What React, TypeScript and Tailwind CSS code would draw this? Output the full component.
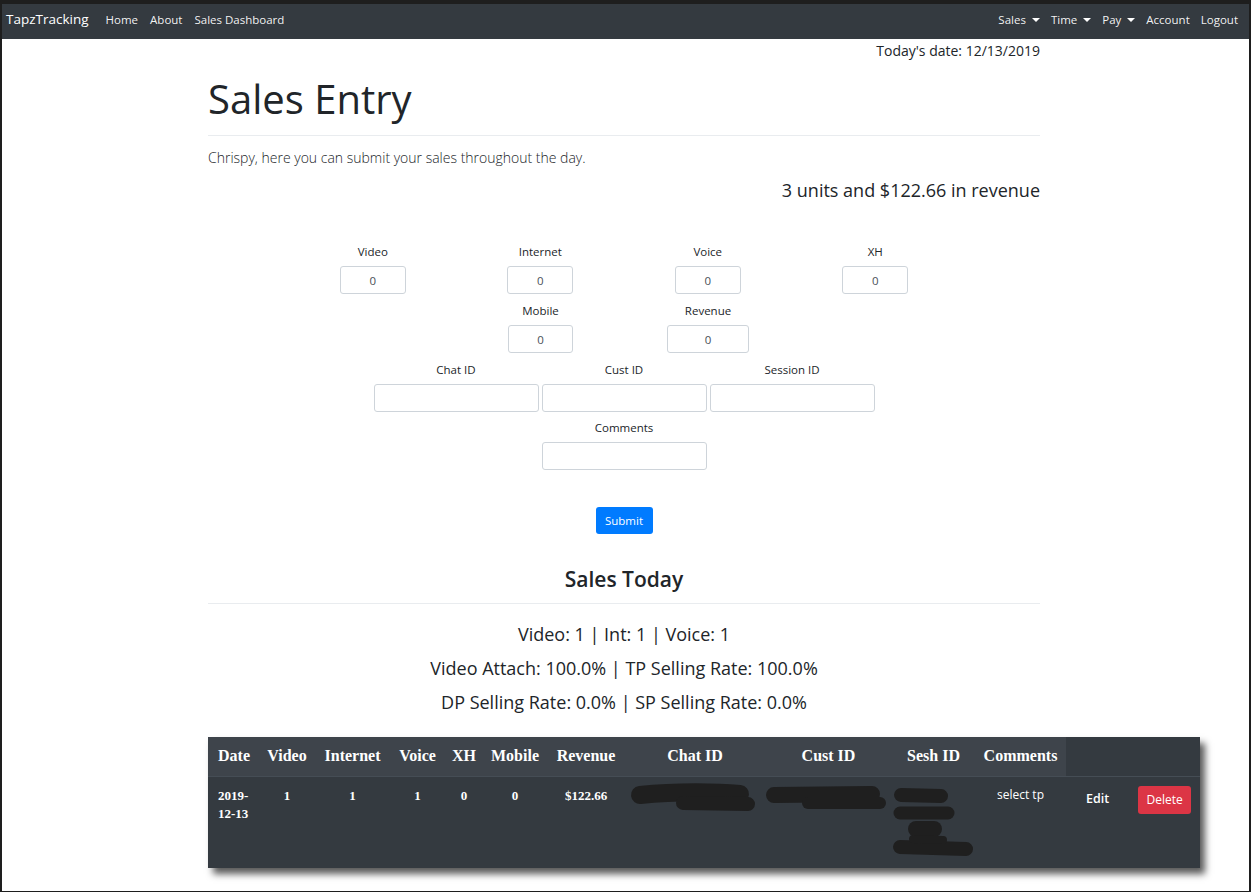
import { useState } from 'react'

const sans = "font-['Open_Sans','Noto_Sans',sans-serif]"

function Caret() {
  return (
    <span className="inline-block ml-[6px] align-middle w-0 h-0 border-l-[4px] border-r-[4px] border-t-[4px] border-l-transparent border-r-transparent border-t-white" />
  )
}

function NavBar() {
  const left = ['Home', 'About', 'Sales Dashboard']
  const right = [
    { label: 'Sales', drop: true },
    { label: 'Time', drop: true },
    { label: 'Pay', drop: true },
    { label: 'Account', drop: false },
    { label: 'Logout', drop: false },
  ]
  return (
    <nav className="flex items-center h-[35px] shrink-0 bg-[#343a40] text-white pl-[4px] pr-[11px] pb-[4px]">
      <span className="text-[13.5px] mr-[17px]">TapzTracking</span>
      <div className="flex items-center gap-[12px] text-[11.5px]">
        {left.map((l) => (
          <a key={l} className="text-white/95">{l}</a>
        ))}
      </div>
      <div className="flex-1" />
      <div className="flex items-center gap-[11px] text-[11.5px]">
        {right.map((r) => (
          <a key={r.label} className="flex items-center text-white/95">
            {r.label}
            {r.drop && <Caret />}
          </a>
        ))}
      </div>
    </nav>
  )
}

function Field({ label, w, value }: { label: string; w: string; value?: string }) {
  return (
    <div className="flex flex-col items-center">
      <label className="text-[11.5px] leading-[16px] text-[#212529] mb-[6px]">{label}</label>
      <input
        readOnly
        value={value ?? ''}
        className={`${w} h-[28px] border border-[#ced4da] rounded-[3px] text-center text-[11.5px] text-[#495057] outline-none`}
      />
    </div>
  )
}

function SalesForm() {
  return (
    <div className="flex flex-col items-center mt-[42px]">
      <div className="grid grid-cols-4 w-[670px]">
        <Field label="Video" w="w-[66px]" value="0" />
        <Field label="Internet" w="w-[66px]" value="0" />
        <Field label="Voice" w="w-[66px]" value="0" />
        <Field label="XH" w="w-[66px]" value="0" />
      </div>
      <div className="flex gap-[94px] mt-[9px] pl-[9px]">
        <Field label="Mobile" w="w-[65px]" value="0" />
        <Field label="Revenue" w="w-[82px]" value="0" />
      </div>
      <div className="flex gap-[3px] mt-[9px]">
        <Field label="Chat ID" w="w-[165px]" />
        <Field label="Cust ID" w="w-[165px]" />
        <Field label="Session ID" w="w-[165px]" />
      </div>
      <div className="mt-[8px]">
        <Field label="Comments" w="w-[165px]" />
      </div>
      <button className="mt-[37px] w-[57px] h-[27px] rounded-[3px] bg-[#007bff] text-white text-[11.5px]">
        Submit
      </button>
    </div>
  )
}

function Redactions() {
  return (
    <svg className="absolute left-0 top-0 pointer-events-none" width="992" height="130" viewBox="0 0 992 130">
      <g stroke="#1f1f1f" strokeLinecap="round" fill="none">
        <path d="M432 58 C 470 54, 510 55, 532 57" strokeWidth="18" />
        <path d="M475 66 L 540 67" strokeWidth="14" />
        <path d="M566 58 L 664 57" strokeWidth="16" />
        <path d="M600 66 L 672 66" strokeWidth="12" />
        <path d="M693 58 L 733 59" strokeWidth="14" />
        <path d="M692 76 L 740 76" strokeWidth="13" />
        <path d="M708 92 L 726 92" strokeWidth="16" />
        <path d="M692 110 L 758 112" strokeWidth="14" />
        <path d="M705 102 L 735 103" strokeWidth="8" />
      </g>
    </svg>
  )
}

function SalesTable() {
  const cols = [
    { h: 'Date', w: 'w-[51px]', align: 'text-left' },
    { h: 'Video', w: 'w-[56px]' },
    { h: 'Internet', w: 'w-[75px]' },
    { h: 'Voice', w: 'w-[55px]' },
    { h: 'XH', w: 'w-[38px]' },
    { h: 'Mobile', w: 'w-[64px]' },
    { h: 'Revenue', w: 'w-[78px]' },
    { h: 'Chat ID', w: 'w-[140px]' },
    { h: 'Cust ID', w: 'w-[127px]' },
    { h: 'Sesh ID', w: 'w-[83px]' },
    { h: 'Comments', w: 'w-[91px]' },
  ]
  const row = ['1', '1', '1', '0', '0', '$122.66', '', '', '']
  return (
    <div className="relative w-[992px] bg-[#343a40] shadow-[5px_6px_7px_rgba(0,0,0,0.65)] font-['Liberation_Serif',serif] font-bold text-white">
      <table className="table-fixed border-collapse w-[992px]">
        <thead>
          <tr className="h-[39px]">
            {cols.map((c) => (
              <th key={c.h} className={`${c.w} bg-[#3e444b] text-[16px] ${c.align ?? 'text-center'} ${c.h === 'Date' ? 'pl-[10px]' : ''}`}>
                {c.h}
              </th>
            ))}
            <th className="w-[134px]" />
          </tr>
        </thead>
        <tbody>
          <tr className="h-[92px] align-top border-t border-[#454d55]">
            <td className="pl-[10px] pt-[10px] text-[13px] leading-[18px]">
              2019-
              <br />
              12-13
            </td>
            {row.map((v, i) => (
              <td key={i} className="text-center pt-[10px] text-[13px] leading-[18px]">{v}</td>
            ))}
            <td className={`${sans} text-center pt-[9px] text-[12px] font-normal leading-[18px]`}>select tp</td>
            <td className={`${sans} pt-[9px]`}>
              <div className="flex items-center">
                <span className="ml-[20px] text-[12.5px] font-semibold">Edit</span>
                <button className="ml-[29px] w-[53px] h-[28px] rounded-[3px] bg-[#dc3545] text-white text-[12px] font-normal">
                  Delete
                </button>
              </div>
            </td>
          </tr>
        </tbody>
      </table>
      <Redactions />
    </div>
  )
}

export default function App() {
  const [date] = useState('12/13/2019')
  return (
    <div className="w-[1251px] h-[892px] bg-[#1e1e1e] pt-[4px] px-[2px] pb-[1px]">
      <div className={`flex flex-col h-full bg-white overflow-hidden text-[#212529] ${sans}`}>
        <NavBar />
        <main className="ml-[206px] w-[832px]">
          <div className="text-right text-[14px] leading-[24px]">Today's date: {date}</div>
          <h1 className="mt-[8px] text-[40px] font-normal leading-[56px]">Sales Entry</h1>
          <hr className="mt-[8px] border-t border-[#e9ecef]" />
          <p className="mt-[12px] text-[14px] font-light leading-[20px]">
            Chrispy, here you can submit your sales throughout the day.
          </p>
          <p className="mt-[10px] text-right text-[18px] leading-[24px]">3 units and $122.66 in revenue</p>
          <SalesForm />
          <h2 className="mt-[31px] text-center text-[21px] font-semibold leading-[28px]">Sales Today</h2>
          <hr className="mt-[10px] border-t border-[#e9ecef]" />
          <div className="mt-[13px] flex flex-col items-center text-[18px] leading-[34px]">
            <div>Video: 1 | Int: 1 | Voice: 1</div>
            <div>Video Attach: 100.0% | TP Selling Rate: 100.0%</div>
            <div>DP Selling Rate: 0.0% | SP Selling Rate: 0.0%</div>
          </div>
          <div className="mt-[18px]">
            <SalesTable />
          </div>
        </main>
      </div>
    </div>
  )
}
